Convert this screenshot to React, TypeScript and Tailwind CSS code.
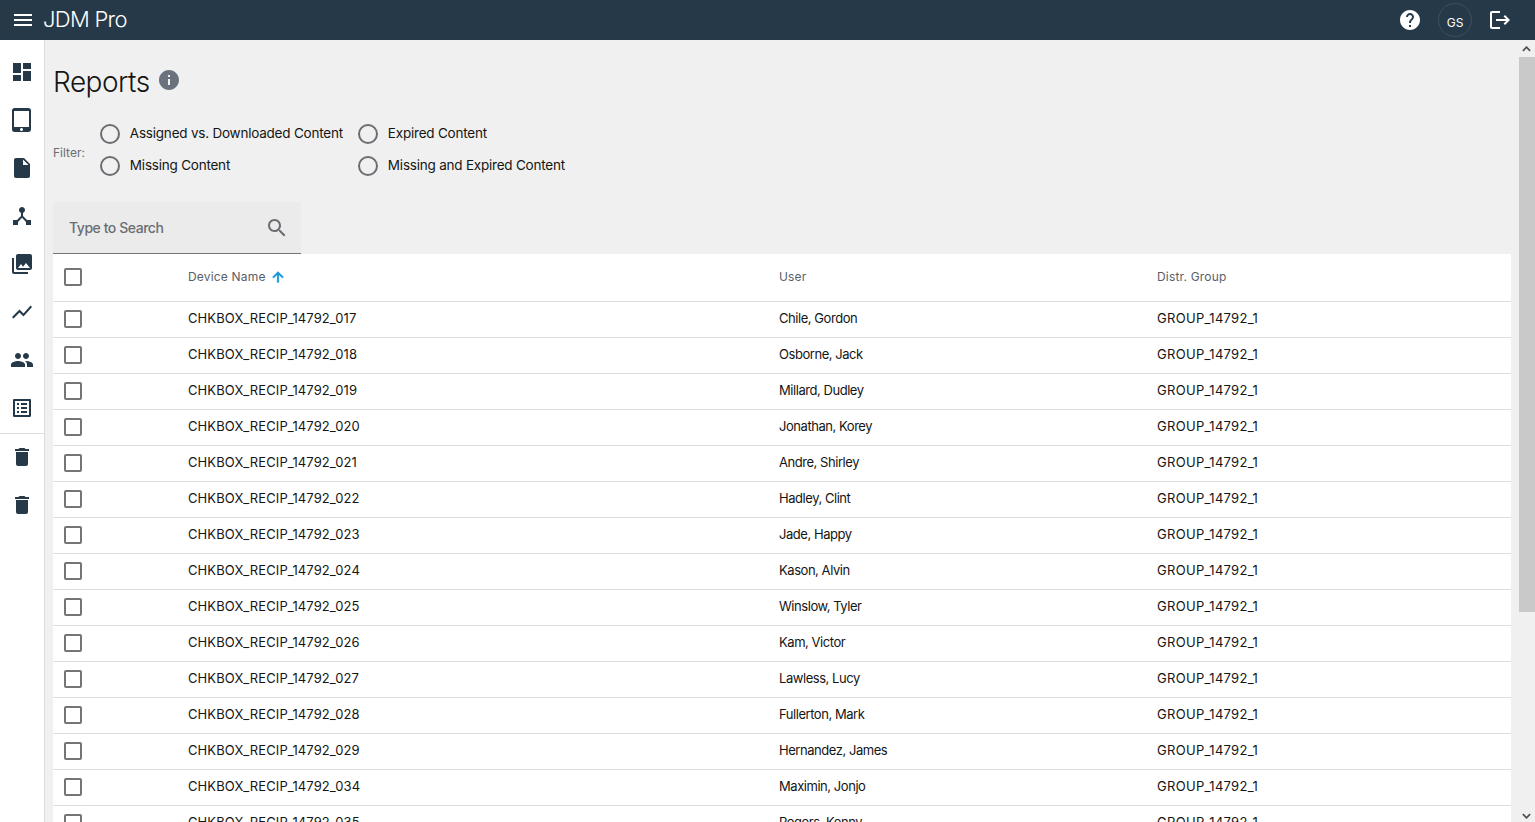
const ICONS = {
  menu: "M3 18h18v-2H3v2zm0-5h18v-2H3v2zm0-7v2h18V6H3z",
  dashboard: "M3 13h8V3H3v10zm0 8h8v-6H3v6zm10 0h8V11h-8v10zm0-18v6h8V3h-8z",
  tablet:
    "M18.5 0h-14C3.12 0 2 1.12 2 2.5v19C2 22.88 3.12 24 4.5 24h14c1.38 0 2.5-1.12 2.5-2.5v-19C21 1.12 19.88 0 18.5 0zm-7 23c-.83 0-1.5-.67-1.5-1.5s.67-1.5 1.5-1.5 1.5.67 1.5 1.5-.67 1.5-1.5 1.5zm7.5-4H4V3h15v16z",
  file: "M6 2c-1.1 0-1.99.9-1.99 2L4 20c0 1.1.89 2 1.99 2H18c1.1 0 2-.9 2-2V8l-6-6H6zm7 7V3.5L18.5 9H13z",
  hub: "M17 16l-4-4V8.82C14.16 8.4 15 7.3 15 6c0-1.66-1.34-3-3-3S9 4.34 9 6c0 1.3.84 2.4 2 2.82V12l-4 4H3v5h5v-3.05l4-4.2 4 4.2V21h5v-5h-4z",
  photos:
    "M22 16V4c0-1.1-.9-2-2-2H8c-1.1 0-2 .9-2 2v12c0 1.1.9 2 2 2h12c1.1 0 2-.9 2-2zm-11-4l2.03 2.71L16 11l4 5H8l3-4zM2 6v14c0 1.1.9 2 2 2h14v-2H4V6H2z",
  chart: "M3.5 18.49l6-6.01 4 4L22 6.92l-1.41-1.41-7.09 7.97-4-4L2 16.99z",
  people:
    "M16 11c1.66 0 2.99-1.34 2.99-3S17.66 5 16 5c-1.66 0-3 1.34-3 3s1.34 3 3 3zm-8 0c1.66 0 2.99-1.34 2.99-3S9.66 5 8 5C6.34 5 5 6.34 5 8s1.34 3 3 3zm0 2c-2.33 0-7 1.17-7 3.5V19h14v-2.5c0-2.33-4.67-3.5-7-3.5zm8 0c-.29 0-.62.02-.97.05 1.16.84 1.97 1.97 1.97 3.45V19h6v-2.5c0-2.33-4.67-3.5-7-3.5z",
  list: "M19 5v14H5V5h14m1.1-2H3.9c-.5 0-.9.4-.9.9v16.2c0 .4.4.9.9.9h16.2c.4 0 .9-.5.9-.9V3.9c0-.5-.5-.9-.9-.9zM11 7h6v2h-6V7zm0 4h6v2h-6v-2zm0 4h6v2h-6zM7 7h2v2H7zm0 4h2v2H7zm0 4h2v2H7z",
  trash: "M6 19c0 1.1.9 2 2 2h8c1.1 0 2-.9 2-2V7H6v12zM19 4h-3.5l-1-1h-5l-1 1H5v2h14V4z",
  help: "M12 2C6.48 2 2 6.48 2 12s4.48 10 10 10 10-4.48 10-10S17.52 2 12 2zm1 17h-2v-2h2v2zm2.07-7.75l-.9.92C13.45 12.9 13 13.5 13 15h-2v-.5c0-1.1.45-2.1 1.17-2.83l1.24-1.26c.37-.36.59-.86.59-1.41 0-1.1-.9-2-2-2s-2 .9-2 2H8c0-2.21 1.79-4 4-4s4 1.79 4 4c0 .88-.36 1.68-.93 2.25z",
  logout:
    "M17 7l-1.41 1.41L18.17 11H8v2h10.17l-2.58 2.58L17 17l5-5zM4 5h8V3H4c-1.1 0-2 .9-2 2v14c0 1.1.9 2 2 2h8v-2H4V5z",
  info: "M12 2C6.48 2 2 6.48 2 12s4.48 10 10 10 10-4.48 10-10S17.52 2 12 2zm1 15h-2v-6h2v6zm0-8h-2V7h2v2z",
  search:
    "M15.5 14h-.79l-.28-.27C15.41 12.59 16 11.11 16 9.5 16 5.91 13.09 3 9.5 3S3 5.91 3 9.5 5.91 16 9.5 16c1.61 0 3.09-.59 4.23-1.57l.27.28v.79l5 4.99L20.49 19l-4.99-5zm-6 0C7.01 14 5 11.99 5 9.5S7.01 5 9.5 5 14 7.01 14 9.5 11.99 14 9.5 14z",
  arrowUp: "M4 12l1.41 1.41L11 7.83V20h2V7.83l5.58 5.59L20 12l-8-8-8 8z",
};

const Icon = ({ d, className }: { d: string; className: string }) => (
  <svg viewBox="0 0 24 24" fill="currentColor" className={className}>
    <path d={d} />
  </svg>
);

const ROWS = [
  ["017", "Chile, Gordon"],
  ["018", "Osborne, Jack"],
  ["019", "Millard, Dudley"],
  ["020", "Jonathan, Korey"],
  ["021", "Andre, Shirley"],
  ["022", "Hadley, Clint"],
  ["023", "Jade, Happy"],
  ["024", "Kason, Alvin"],
  ["025", "Winslow, Tyler"],
  ["026", "Kam, Victor"],
  ["027", "Lawless, Lucy"],
  ["028", "Fullerton, Mark"],
  ["029", "Hernandez, James"],
  ["034", "Maximin, Jonjo"],
  ["035", "Rogers, Kenny"],
];

const NAV_TOP = [ICONS.dashboard, ICONS.tablet, ICONS.file, ICONS.hub, ICONS.photos, ICONS.chart, ICONS.people, ICONS.list];

const Radio = ({ label }: { label: string }) => (
  <label className="flex h-8 items-center">
    <span className="h-5 w-5 rounded-full border-2 border-[#6a6e73]" />
    <span className="ml-[10px] pb-[2px] text-[13.5px] tracking-[-0.22px] text-[#151515]">{label}</span>
  </label>
);

const Checkbox = () => <span className="ml-[11px] block h-[18px] w-[18px] rounded-[2px] border-2 border-[#757575] bg-white" />;

export default function App() {
  return (
    <div className="flex h-[822px] flex-col overflow-hidden bg-[#f0f0f0] font-['Inter',sans-serif] text-[#151515]">
      <header className="flex h-10 shrink-0 items-center bg-[#263948] text-white">
        <Icon d={ICONS.menu} className="ml-[11px] h-6 w-6" />
        <span className="ml-[8px] pb-[2px] text-[22px] font-light tracking-[-0.7px]">JDM Pro</span>
        <div className="ml-auto flex items-center">
          <Icon d={ICONS.help} className="h-6 w-6" />
          <span className="ml-[16px] flex h-[34px] w-[34px] items-center justify-center rounded-full border border-[#3e505e] pt-[5px] text-xs">
            GS
          </span>
          <Icon d={ICONS.logout} className="mr-[23px] ml-[16px] h-6 w-6" />
        </div>
      </header>

      <div className="flex min-h-0 flex-1">
        <nav className="flex w-[45px] shrink-0 flex-col border-r border-[#dcdcdc] bg-white pt-2 text-[#263948]">
          {NAV_TOP.map((d, i) => (
            <div key={i} className="flex h-12 items-center justify-center">
              <Icon d={d} className="h-6 w-6" />
            </div>
          ))}
          <div className="mt-[1px] mb-[-1px] border-t border-[#dcdcdc]" />
          {[0, 1].map((i) => (
            <div key={i} className="flex h-12 items-center justify-center">
              <Icon d={ICONS.trash} className="h-6 w-6" />
            </div>
          ))}
        </nav>

        <main className="min-w-0 flex-1 pt-[24px] pl-2">
          <div className="flex h-[36px] items-center">
            <h1 className="text-[28px] font-light tracking-[-0.5px]">Reports</h1>
            <Icon d={ICONS.info} className="mb-[5px] ml-[7px] h-6 w-6 text-[#6a737d]" />
          </div>

          <div className="mt-[18px] flex items-center">
            <span className="mt-[5px] text-xs text-[#6a6e73]">Filter:</span>
            <div className="ml-[15px] grid grid-cols-[258px_auto]">
              <Radio label="Assigned vs. Downloaded Content" />
              <Radio label="Expired Content" />
              <Radio label="Missing Content" />
              <Radio label="Missing and Expired Content" />
            </div>
          </div>

          <div className="mt-[20px] flex h-[52px] w-[248px] items-center justify-between rounded-t-[4px] border-b border-[#757575] bg-[#ebebeb] pr-3 pl-4">
            <span className="text-sm font-medium tracking-[-0.45px] text-[#6a6e73]">Type to Search</span>
            <Icon d={ICONS.search} className="h-6 w-6 text-[#6a6e73]" />
          </div>

          <div className="w-[1458px] bg-white">
            <div className="flex h-[48px] items-center border-b border-[#dedede] pb-[2px] text-xs tracking-[0.18px] text-[#5a6068]">
              <div className="w-[135px]">
                <Checkbox />
              </div>
              <div className="flex w-[591px] items-center">
                Device Name
                <Icon d={ICONS.arrowUp} className="ml-[4px] h-[16px] w-[16px] stroke-[#0a8fd6] stroke-1 text-[#0a8fd6]" />
              </div>
              <div className="w-[378px]">User</div>
              <div>Distr. Group</div>
            </div>
            {ROWS.map(([id, user]) => (
              <div key={id} className="flex h-9 items-center border-b border-[#dedede] pb-px text-[13px]">
                <div className="w-[135px]">
                  <Checkbox />
                </div>
                <div className="w-[591px] tracking-[0.1px]">CHKBOX_RECIP_14792_{id}</div>
                <div className="w-[378px] tracking-[-0.45px]">{user}</div>
                <div className="tracking-[0.3px]">GROUP_14792_1</div>
              </div>
            ))}
          </div>
        </main>

        <div className="relative w-[17px] shrink-0 bg-[#f0f0f0]">
          <div className="absolute top-[17px] left-px h-[555px] w-4 bg-[#c9c9c9]" />
          <svg viewBox="0 0 10 6" className="absolute top-[6px] left-1 h-[6px] w-[9px] text-[#505050]">
            <path d="M1 5 L5 1 L9 5" fill="none" stroke="currentColor" strokeWidth="2" />
          </svg>
          <svg viewBox="0 0 10 6" className="absolute bottom-[3px] left-1 h-[6px] w-[9px] text-[#505050]">
            <path d="M1 1 L5 5 L9 1" fill="none" stroke="currentColor" strokeWidth="2" />
          </svg>
        </div>
      </div>
    </div>
  );
}
